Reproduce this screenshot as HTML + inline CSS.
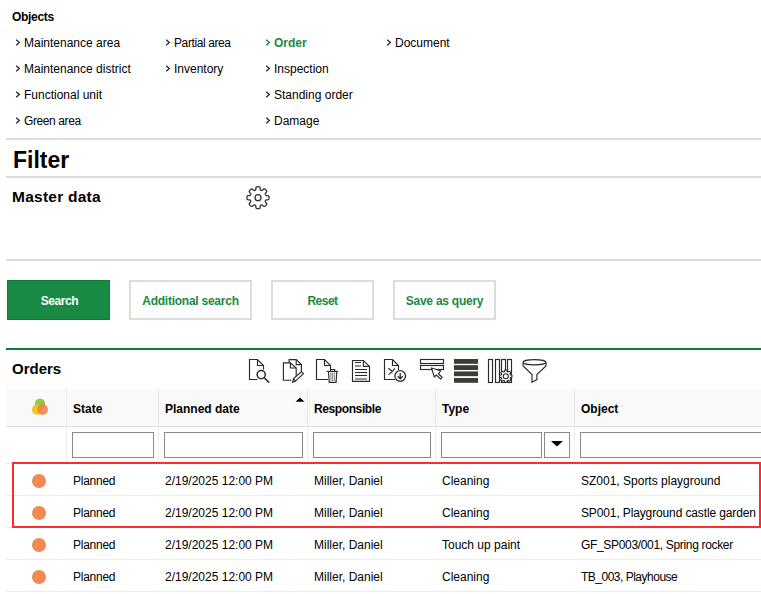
<!DOCTYPE html>
<html><head><meta charset="utf-8">
<style>
html,body{margin:0;padding:0;background:#fff;}
body{width:761px;height:594px;overflow:hidden;position:relative;font-family:"Liberation Sans",sans-serif;color:#000;}
.a{position:absolute;white-space:nowrap;line-height:12px;font-size:12px;}
.b{font-weight:bold;}
.hl{position:absolute;left:6px;right:0;height:2px;background:#dcdcdc;}
.lnk{position:absolute;white-space:nowrap;font-size:12px;line-height:12px;}
.chev{position:absolute;}
.btn{position:absolute;top:280px;height:40px;box-sizing:border-box;border:2px solid #dcdcdc;background:#fff;color:#188a43;font-weight:bold;font-size:12px;text-align:center;line-height:38px;letter-spacing:-0.25px;}
.th{position:absolute;top:403px;font-weight:bold;font-size:12px;line-height:12px;white-space:nowrap;}
.inp{position:absolute;top:432px;height:26px;box-sizing:border-box;border:1px solid #8a8a8a;background:#fff;}
.cd{position:absolute;top:427px;width:1px;height:36px;background:#efefef;}
.hd{position:absolute;top:389px;width:1px;height:37px;background:#ececec;}
.rs{position:absolute;left:6px;right:0;height:1px;background:#ececec;}
.td{position:absolute;font-size:12px;line-height:12px;white-space:nowrap;}
.dot{position:absolute;left:32px;width:14px;height:14px;border-radius:50%;background:#ef8a50;}
</style></head><body>

<div class="a b" style="left:12px;top:11px;letter-spacing:-0.3px">Objects</div>

<!-- links -->
<svg class="chev" style="left:14px;top:38px" width="8" height="10" viewBox="0 0 8 10"><path d="M2.2 1.7 L5.4 4.5 L2.2 7.3" fill="none" stroke="#222" stroke-width="1.2"/></svg><div class="lnk" style="left:24px;top:37px">Maintenance area</div>
<svg class="chev" style="left:14px;top:64px" width="8" height="10" viewBox="0 0 8 10"><path d="M2.2 1.7 L5.4 4.5 L2.2 7.3" fill="none" stroke="#222" stroke-width="1.2"/></svg><div class="lnk" style="left:24px;top:63px">Maintenance district</div>
<svg class="chev" style="left:14px;top:90px" width="8" height="10" viewBox="0 0 8 10"><path d="M2.2 1.7 L5.4 4.5 L2.2 7.3" fill="none" stroke="#222" stroke-width="1.2"/></svg><div class="lnk" style="left:24px;top:89px">Functional unit</div>
<svg class="chev" style="left:14px;top:116px" width="8" height="10" viewBox="0 0 8 10"><path d="M2.2 1.7 L5.4 4.5 L2.2 7.3" fill="none" stroke="#222" stroke-width="1.2"/></svg><div class="lnk" style="left:24px;top:115px;letter-spacing:-0.4px">Green area</div>

<svg class="chev" style="left:164px;top:38px" width="8" height="10" viewBox="0 0 8 10"><path d="M2.2 1.7 L5.4 4.5 L2.2 7.3" fill="none" stroke="#222" stroke-width="1.2"/></svg><div class="lnk" style="left:174px;top:37px;letter-spacing:-0.4px">Partial area</div>
<svg class="chev" style="left:164px;top:64px" width="8" height="10" viewBox="0 0 8 10"><path d="M2.2 1.7 L5.4 4.5 L2.2 7.3" fill="none" stroke="#222" stroke-width="1.2"/></svg><div class="lnk" style="left:174px;top:63px">Inventory</div>

<svg class="chev" style="left:264px;top:38px" width="8" height="10" viewBox="0 0 8 10"><path d="M2.2 1.7 L5.4 4.5 L2.2 7.3" fill="none" stroke="#188a43" stroke-width="1.5"/></svg><div class="lnk b" style="left:274px;top:37px;color:#188a43">Order</div>
<svg class="chev" style="left:264px;top:64px" width="8" height="10" viewBox="0 0 8 10"><path d="M2.2 1.7 L5.4 4.5 L2.2 7.3" fill="none" stroke="#222" stroke-width="1.2"/></svg><div class="lnk" style="left:274px;top:63px">Inspection</div>
<svg class="chev" style="left:264px;top:90px" width="8" height="10" viewBox="0 0 8 10"><path d="M2.2 1.7 L5.4 4.5 L2.2 7.3" fill="none" stroke="#222" stroke-width="1.2"/></svg><div class="lnk" style="left:274px;top:89px">Standing order</div>
<svg class="chev" style="left:264px;top:116px" width="8" height="10" viewBox="0 0 8 10"><path d="M2.2 1.7 L5.4 4.5 L2.2 7.3" fill="none" stroke="#222" stroke-width="1.2"/></svg><div class="lnk" style="left:274px;top:115px">Damage</div>

<svg class="chev" style="left:385px;top:38px" width="8" height="10" viewBox="0 0 8 10"><path d="M2.2 1.7 L5.4 4.5 L2.2 7.3" fill="none" stroke="#222" stroke-width="1.2"/></svg><div class="lnk" style="left:395px;top:37px">Document</div>

<div class="hl" style="top:138px"></div>
<div class="a b" style="left:13px;top:149px;font-size:23px;line-height:23px;color:#000">Filter</div>
<div class="hl" style="top:176px"></div>
<div class="a b" style="left:12px;top:189px;font-size:15.5px;line-height:15px;letter-spacing:0.25px">Master data</div>

<!-- gear -->
<svg style="position:absolute;left:244px;top:184px" width="28" height="28" viewBox="0 0 28 28">
<path fill="none" stroke="#333" stroke-width="1.3" stroke-linejoin="round" d="M14.00 2.70 L14.22 2.70 L14.43 2.71 L14.65 2.72 L14.86 2.74 L15.08 2.77 L15.29 2.81 L15.50 2.88 L15.70 2.99 L15.88 3.19 L16.02 3.55 L16.11 4.09 L16.16 4.72 L16.20 5.26 L16.28 5.62 L16.38 5.85 L16.50 6.00 L16.64 6.10 L16.77 6.18 L16.92 6.25 L17.06 6.31 L17.21 6.37 L17.36 6.42 L17.51 6.46 L17.68 6.48 L17.87 6.47 L18.10 6.38 L18.41 6.17 L18.83 5.82 L19.30 5.41 L19.75 5.10 L20.10 4.94 L20.37 4.93 L20.60 4.99 L20.79 5.09 L20.97 5.21 L21.14 5.34 L21.30 5.48 L21.47 5.62 L21.62 5.77 L21.78 5.92 L21.93 6.08 L22.08 6.23 L22.22 6.40 L22.36 6.56 L22.49 6.73 L22.61 6.91 L22.71 7.10 L22.77 7.33 L22.76 7.60 L22.60 7.95 L22.29 8.40 L21.88 8.87 L21.53 9.29 L21.32 9.60 L21.23 9.83 L21.22 10.02 L21.24 10.19 L21.28 10.34 L21.33 10.49 L21.39 10.64 L21.45 10.78 L21.52 10.93 L21.60 11.06 L21.70 11.20 L21.85 11.32 L22.08 11.42 L22.44 11.50 L22.98 11.54 L23.61 11.59 L24.15 11.68 L24.51 11.82 L24.71 12.00 L24.82 12.20 L24.89 12.41 L24.93 12.62 L24.96 12.84 L24.98 13.05 L24.99 13.27 L25.00 13.48 L25.00 13.70 L25.00 13.92 L24.99 14.13 L24.98 14.35 L24.96 14.56 L24.93 14.78 L24.89 14.99 L24.82 15.20 L24.71 15.40 L24.51 15.58 L24.15 15.72 L23.61 15.81 L22.98 15.86 L22.44 15.90 L22.08 15.98 L21.85 16.08 L21.70 16.20 L21.60 16.34 L21.52 16.47 L21.45 16.62 L21.39 16.76 L21.33 16.91 L21.28 17.06 L21.24 17.21 L21.22 17.38 L21.23 17.57 L21.32 17.80 L21.53 18.11 L21.88 18.53 L22.29 19.00 L22.60 19.45 L22.76 19.80 L22.77 20.07 L22.71 20.30 L22.61 20.49 L22.49 20.67 L22.36 20.84 L22.22 21.00 L22.08 21.17 L21.93 21.32 L21.78 21.48 L21.62 21.63 L21.47 21.78 L21.30 21.92 L21.14 22.06 L20.97 22.19 L20.79 22.31 L20.60 22.41 L20.37 22.47 L20.10 22.46 L19.75 22.30 L19.30 21.99 L18.83 21.58 L18.41 21.23 L18.10 21.02 L17.87 20.93 L17.68 20.92 L17.51 20.94 L17.36 20.98 L17.21 21.03 L17.06 21.09 L16.92 21.15 L16.77 21.22 L16.64 21.30 L16.50 21.40 L16.38 21.55 L16.28 21.78 L16.20 22.14 L16.16 22.68 L16.11 23.31 L16.02 23.85 L15.88 24.21 L15.70 24.41 L15.50 24.52 L15.29 24.59 L15.08 24.63 L14.86 24.66 L14.65 24.68 L14.43 24.69 L14.22 24.70 L14.00 24.70 L13.78 24.70 L13.57 24.69 L13.35 24.68 L13.14 24.66 L12.92 24.63 L12.71 24.59 L12.50 24.52 L12.30 24.41 L12.12 24.21 L11.98 23.85 L11.89 23.31 L11.84 22.68 L11.80 22.14 L11.72 21.78 L11.62 21.55 L11.50 21.40 L11.36 21.30 L11.23 21.22 L11.08 21.15 L10.94 21.09 L10.79 21.03 L10.64 20.98 L10.49 20.94 L10.32 20.92 L10.13 20.93 L9.90 21.02 L9.59 21.23 L9.17 21.58 L8.70 21.99 L8.25 22.30 L7.90 22.46 L7.63 22.47 L7.40 22.41 L7.21 22.31 L7.03 22.19 L6.86 22.06 L6.70 21.92 L6.53 21.78 L6.38 21.63 L6.22 21.48 L6.07 21.32 L5.92 21.17 L5.78 21.00 L5.64 20.84 L5.51 20.67 L5.39 20.49 L5.29 20.30 L5.23 20.07 L5.24 19.80 L5.40 19.45 L5.71 19.00 L6.12 18.53 L6.47 18.11 L6.68 17.80 L6.77 17.57 L6.78 17.38 L6.76 17.21 L6.72 17.06 L6.67 16.91 L6.61 16.76 L6.55 16.62 L6.48 16.47 L6.40 16.34 L6.30 16.20 L6.15 16.08 L5.92 15.98 L5.56 15.90 L5.02 15.86 L4.39 15.81 L3.85 15.72 L3.49 15.58 L3.29 15.40 L3.18 15.20 L3.11 14.99 L3.07 14.78 L3.04 14.56 L3.02 14.35 L3.01 14.13 L3.00 13.92 L3.00 13.70 L3.00 13.48 L3.01 13.27 L3.02 13.05 L3.04 12.84 L3.07 12.62 L3.11 12.41 L3.18 12.20 L3.29 12.00 L3.49 11.82 L3.85 11.68 L4.39 11.59 L5.02 11.54 L5.56 11.50 L5.92 11.42 L6.15 11.32 L6.30 11.20 L6.40 11.06 L6.48 10.93 L6.55 10.78 L6.61 10.64 L6.67 10.49 L6.72 10.34 L6.76 10.19 L6.78 10.02 L6.77 9.83 L6.68 9.60 L6.47 9.29 L6.12 8.87 L5.71 8.40 L5.40 7.95 L5.24 7.60 L5.23 7.33 L5.29 7.10 L5.39 6.91 L5.51 6.73 L5.64 6.56 L5.78 6.40 L5.92 6.23 L6.07 6.08 L6.22 5.92 L6.38 5.77 L6.53 5.62 L6.70 5.48 L6.86 5.34 L7.03 5.21 L7.21 5.09 L7.40 4.99 L7.63 4.93 L7.90 4.94 L8.25 5.10 L8.70 5.41 L9.17 5.82 L9.59 6.17 L9.90 6.38 L10.13 6.47 L10.32 6.48 L10.49 6.46 L10.64 6.42 L10.79 6.37 L10.94 6.31 L11.08 6.25 L11.23 6.18 L11.36 6.10 L11.50 6.00 L11.62 5.85 L11.72 5.62 L11.80 5.26 L11.84 4.72 L11.89 4.09 L11.98 3.55 L12.12 3.19 L12.30 2.99 L12.50 2.88 L12.71 2.81 L12.92 2.77 L13.14 2.74 L13.35 2.72 L13.57 2.71 L13.78 2.70 Z"/>
<circle cx="14" cy="13.7" r="3" fill="none" stroke="#333" stroke-width="1.3"/>
</svg>

<div class="hl" style="top:259px"></div>

<div class="btn" style="left:7px;width:103px;background:#188a43;border:1px solid #137a38;color:#fff;line-height:40px;letter-spacing:-0.4px;padding-left:2px">Search</div>
<div class="btn" style="left:129px;width:123px;">Additional search</div>
<div class="btn" style="left:271px;width:103px;letter-spacing:-0.5px">Reset</div>
<div class="btn" style="left:393px;width:103px;">Save as query</div>

<div class="hl" style="top:348px;background:#0b7a32"></div>
<div class="a b" style="left:12px;top:361px;font-size:15px;line-height:15px;">Orders</div>

<svg style="position:absolute;left:0;top:0" width="761" height="594" viewBox="0 0 761 594">
<g fill="none" stroke="#2b2b2b" stroke-width="1.15" stroke-linejoin="miter">
<!-- icon1 doc + magnifier -->
<path d="M263.5 369.6 V365.5 L257.5 359.5 H249.5 V379.5 H257.5"/>
<path d="M257.5 359.5 V365.5 H263.5"/>
<circle cx="261.2" cy="374.6" r="4.1" stroke-width="1.5"/>
<path d="M264.2 377.7 L269.2 382.6" stroke-width="1.5"/>
<!-- icon2 copy + pencil -->
<path d="M289.1 362.8 V359.6 H296.2 L301.4 364.6 V372.5"/>
<path d="M296.2 359.6 V364.6 H301.4"/>
<path d="M296.2 377 V368 L290.4 362.8 H283.4 V380.2 H291.5"/>
<path d="M290.4 362.8 V368 H296.2"/>
<path d="M292.6 382.3 L293.6 378.6 L301.6 371.6 L303.4 373.6 L295.6 381.1 Z" fill="#fff"/>
<path d="M293.6 378.6 L295.6 381.1"/>
<!-- icon3 doc + trash -->
<path d="M330.5 369.6 V365.5 L324.5 359.5 H316.5 V379.5 H328"/>
<path d="M324.5 359.5 V365.5 H330.5"/>
<path d="M326.8 371.4 H338.1"/>
<path d="M330.6 371.4 V369.5 H334.7 V371.4"/>
<path d="M328.5 371.4 L329.2 382.3 H336.1 L336.8 371.4"/>
<path d="M330.9 372.5 V381 M332.6 372.5 V381 M334.3 372.5 V381" stroke-width="0.8" stroke="#666"/>
<!-- icon4 text doc -->
<path d="M352.5 360.5 H363.4 L369.5 366.4 V381.3 H352.5 Z"/>
<path d="M363.4 360.5 V366.4 H369.5"/>
<path d="M355 362.5 H361 M355 366 H361 M355 369.5 H367 M355 372.5 H367 M355 375.5 H367 M355 379 H367" stroke-width="1"/>
<!-- icon5 export doc -->
<path d="M398.5 370 V365.5 L392.5 359.5 H384.5 V379.5 H395"/>
<path d="M392.5 359.5 V365.5 H398.5"/>
<path d="M388.3 368.3 L392.4 371.5 L388.6 374.6 M392.4 371.5 L394.8 368.3"/>
<circle cx="400.2" cy="376" r="5.3" fill="#fff" stroke-width="1.3"/>
<path d="M400.2 373 V378.8 M397.7 376.3 L400.2 378.9 L402.7 376.3" stroke-width="1.3"/>
<!-- icon6 select rows -->
<rect x="420.5" y="359.5" width="23" height="4"/>
<rect x="420.5" y="365.5" width="23" height="4"/>
<path d="M431.5 368 L434.3 377 L436.3 375 L440.6 379 L442.2 377.2 L438.4 373.8 L440.6 370.8 Z" fill="#fff"/>
<!-- icon8 columns -->
<rect x="488.5" y="359.5" width="4" height="23"/>
<rect x="495.5" y="359.5" width="4" height="23"/>
<rect x="501.5" y="359.5" width="4" height="23"/>
<rect x="507.5" y="359.5" width="4" height="23"/>
<path d="M505.80 370.00 L505.92 370.00 L506.04 370.01 L506.16 370.01 L506.29 370.02 L506.41 370.04 L506.53 370.06 L506.64 370.09 L506.76 370.15 L506.86 370.26 L506.95 370.44 L507.00 370.71 L507.04 371.03 L507.08 371.30 L507.13 371.49 L507.19 371.61 L507.27 371.68 L507.35 371.74 L507.43 371.78 L507.51 371.82 L507.60 371.86 L507.68 371.89 L507.77 371.92 L507.86 371.95 L507.96 371.97 L508.06 371.97 L508.19 371.93 L508.36 371.83 L508.58 371.66 L508.83 371.47 L509.06 371.32 L509.25 371.25 L509.40 371.25 L509.52 371.29 L509.63 371.34 L509.73 371.41 L509.82 371.49 L509.92 371.57 L510.01 371.65 L510.10 371.73 L510.18 371.82 L510.27 371.90 L510.35 371.99 L510.43 372.08 L510.51 372.18 L510.59 372.27 L510.66 372.37 L510.71 372.48 L510.75 372.60 L510.75 372.75 L510.68 372.94 L510.53 373.17 L510.34 373.42 L510.17 373.64 L510.07 373.81 L510.03 373.94 L510.03 374.04 L510.05 374.14 L510.08 374.23 L510.11 374.32 L510.14 374.40 L510.18 374.49 L510.22 374.57 L510.26 374.65 L510.32 374.73 L510.39 374.81 L510.51 374.87 L510.70 374.92 L510.97 374.96 L511.29 375.00 L511.56 375.05 L511.74 375.14 L511.85 375.24 L511.91 375.36 L511.94 375.47 L511.96 375.59 L511.98 375.71 L511.99 375.84 L511.99 375.96 L512.00 376.08 L512.00 376.20 L512.00 376.32 L511.99 376.44 L511.99 376.56 L511.98 376.69 L511.96 376.81 L511.94 376.93 L511.91 377.04 L511.85 377.16 L511.74 377.26 L511.56 377.35 L511.29 377.40 L510.97 377.44 L510.70 377.48 L510.51 377.53 L510.39 377.59 L510.32 377.67 L510.26 377.75 L510.22 377.83 L510.18 377.91 L510.14 378.00 L510.11 378.08 L510.08 378.17 L510.05 378.26 L510.03 378.36 L510.03 378.46 L510.07 378.59 L510.17 378.76 L510.34 378.98 L510.53 379.23 L510.68 379.46 L510.75 379.65 L510.75 379.80 L510.71 379.92 L510.66 380.03 L510.59 380.13 L510.51 380.22 L510.43 380.32 L510.35 380.41 L510.27 380.50 L510.18 380.58 L510.10 380.67 L510.01 380.75 L509.92 380.83 L509.82 380.91 L509.73 380.99 L509.63 381.06 L509.52 381.11 L509.40 381.15 L509.25 381.15 L509.06 381.08 L508.83 380.93 L508.58 380.74 L508.36 380.57 L508.19 380.47 L508.06 380.43 L507.96 380.43 L507.86 380.45 L507.77 380.48 L507.68 380.51 L507.60 380.54 L507.51 380.58 L507.43 380.62 L507.35 380.66 L507.27 380.72 L507.19 380.79 L507.13 380.91 L507.08 381.10 L507.04 381.37 L507.00 381.69 L506.95 381.96 L506.86 382.14 L506.76 382.25 L506.64 382.31 L506.53 382.34 L506.41 382.36 L506.29 382.38 L506.16 382.39 L506.04 382.39 L505.92 382.40 L505.80 382.40 L505.68 382.40 L505.56 382.39 L505.44 382.39 L505.31 382.38 L505.19 382.36 L505.07 382.34 L504.96 382.31 L504.84 382.25 L504.74 382.14 L504.65 381.96 L504.60 381.69 L504.56 381.37 L504.52 381.10 L504.47 380.91 L504.41 380.79 L504.33 380.72 L504.25 380.66 L504.17 380.62 L504.09 380.58 L504.00 380.54 L503.92 380.51 L503.83 380.48 L503.74 380.45 L503.64 380.43 L503.54 380.43 L503.41 380.47 L503.24 380.57 L503.02 380.74 L502.77 380.93 L502.54 381.08 L502.35 381.15 L502.20 381.15 L502.08 381.11 L501.97 381.06 L501.87 380.99 L501.78 380.91 L501.68 380.83 L501.59 380.75 L501.50 380.67 L501.42 380.58 L501.33 380.50 L501.25 380.41 L501.17 380.32 L501.09 380.22 L501.01 380.13 L500.94 380.03 L500.89 379.92 L500.85 379.80 L500.85 379.65 L500.92 379.46 L501.07 379.23 L501.26 378.98 L501.43 378.76 L501.53 378.59 L501.57 378.46 L501.57 378.36 L501.55 378.26 L501.52 378.17 L501.49 378.08 L501.46 378.00 L501.42 377.91 L501.38 377.83 L501.34 377.75 L501.28 377.67 L501.21 377.59 L501.09 377.53 L500.90 377.48 L500.63 377.44 L500.31 377.40 L500.04 377.35 L499.86 377.26 L499.75 377.16 L499.69 377.04 L499.66 376.93 L499.64 376.81 L499.62 376.69 L499.61 376.56 L499.61 376.44 L499.60 376.32 L499.60 376.20 L499.60 376.08 L499.61 375.96 L499.61 375.84 L499.62 375.71 L499.64 375.59 L499.66 375.47 L499.69 375.36 L499.75 375.24 L499.86 375.14 L500.04 375.05 L500.31 375.00 L500.63 374.96 L500.90 374.92 L501.09 374.87 L501.21 374.81 L501.28 374.73 L501.34 374.65 L501.38 374.57 L501.42 374.49 L501.46 374.40 L501.49 374.32 L501.52 374.23 L501.55 374.14 L501.57 374.04 L501.57 373.94 L501.53 373.81 L501.43 373.64 L501.26 373.42 L501.07 373.17 L500.92 372.94 L500.85 372.75 L500.85 372.60 L500.89 372.48 L500.94 372.37 L501.01 372.27 L501.09 372.18 L501.17 372.08 L501.25 371.99 L501.33 371.90 L501.42 371.82 L501.50 371.73 L501.59 371.65 L501.68 371.57 L501.78 371.49 L501.87 371.41 L501.97 371.34 L502.08 371.29 L502.20 371.25 L502.35 371.25 L502.54 371.32 L502.77 371.47 L503.02 371.66 L503.24 371.83 L503.41 371.93 L503.54 371.97 L503.64 371.97 L503.74 371.95 L503.83 371.92 L503.92 371.89 L504.00 371.86 L504.09 371.82 L504.17 371.78 L504.25 371.74 L504.33 371.68 L504.41 371.61 L504.47 371.49 L504.52 371.30 L504.56 371.03 L504.60 370.71 L504.65 370.44 L504.74 370.26 L504.84 370.15 L504.96 370.09 L505.07 370.06 L505.19 370.04 L505.31 370.02 L505.44 370.01 L505.56 370.01 L505.68 370.00 Z" fill="#fff" stroke-width="1.1"/>
<circle cx="505.8" cy="376.2" r="2.5" stroke-width="1.1"/>
<!-- icon9 funnel -->
<ellipse cx="534.5" cy="362.2" rx="11.4" ry="2.6"/>
<path d="M523.1 362.2 V366 L532 374.5 V382.2 L536.9 379.6 V374.5 L546 366 V362.2"/>
</g>
<g fill="#3e3a36">
<rect x="454" y="359" width="24" height="4.8"/>
<rect x="454" y="365.2" width="24" height="4.8"/>
<rect x="454" y="371.4" width="24" height="4.8"/>
<rect x="454" y="378" width="24" height="4.8"/>
</g>
</svg>

<!-- table header -->
<div style="position:absolute;left:6px;right:0;top:389px;height:37px;background:#f9f9f9;"></div>
<div class="rs" style="top:426px;background:#dedede"></div>
<div class="hd" style="left:66px"></div>
<div class="hd" style="left:158px"></div>
<div class="hd" style="left:307px"></div>
<div class="hd" style="left:435px"></div>
<div class="hd" style="left:574px"></div>

<svg style="position:absolute;left:28px;top:395px" width="24" height="22" viewBox="0 0 24 22">
<circle cx="12" cy="8.8" r="5.2" fill="#94c83d"/>
<circle cx="9.1" cy="14.5" r="5.2" fill="#f2c015" fill-opacity="0.9"/>
<circle cx="14.6" cy="14.5" r="5.4" fill="#f08048" fill-opacity="0.85"/>
</svg>

<div class="th" style="left:73px">State</div>
<div class="th" style="left:165px">Planned date</div>
<svg style="position:absolute;left:295px;top:397px" width="10" height="5" viewBox="0 0 10 5"><path d="M0.5 4.8 L5 0.6 L9.5 4.8 Z" fill="#000"/></svg>
<div class="th" style="left:314px;letter-spacing:-0.4px">Responsible</div>
<div class="th" style="left:442px">Type</div>
<div class="th" style="left:581px">Object</div>

<!-- filter row -->
<div class="cd" style="left:66px"></div>
<div class="cd" style="left:158px"></div>
<div class="cd" style="left:307px"></div>
<div class="cd" style="left:435px"></div>
<div class="cd" style="left:574px"></div>
<div class="inp" style="left:72px;width:82px"></div>
<div class="inp" style="left:164px;width:139px"></div>
<div class="inp" style="left:313px;width:118px"></div>
<div class="inp" style="left:441px;width:101px"></div>
<div class="inp" style="left:544px;width:26px"></div>
<svg style="position:absolute;left:551px;top:441px" width="12" height="6" viewBox="0 0 12 6"><path d="M0 0 L12 0 L6 5.5 Z" fill="#000"/></svg>
<div class="inp" style="left:580px;width:190px"></div>

<!-- rows -->
<div class="rs" style="top:463px"></div>
<div class="rs" style="top:495px"></div>
<div class="rs" style="top:527px"></div>
<div class="rs" style="top:559px"></div>
<div class="rs" style="top:591px"></div>

<div class="dot" style="top:474px"></div>
<div class="td" style="left:73px;top:475px;letter-spacing:-0.25px">Planned</div>
<div class="td" style="left:165px;top:475px">2/19/2025 12:00 PM</div>
<div class="td" style="left:314px;top:475px">Miller, Daniel</div>
<div class="td" style="left:442px;top:475px">Cleaning</div>
<div class="td" style="left:581px;top:475px">SZ001, Sports playground</div>

<div class="dot" style="top:506px"></div>
<div class="td" style="left:73px;top:507px;letter-spacing:-0.25px">Planned</div>
<div class="td" style="left:165px;top:507px">2/19/2025 12:00 PM</div>
<div class="td" style="left:314px;top:507px">Miller, Daniel</div>
<div class="td" style="left:442px;top:507px">Cleaning</div>
<div class="td" style="left:581px;top:507px;letter-spacing:-0.13px">SP001, Playground castle garden</div>

<div class="dot" style="top:538px"></div>
<div class="td" style="left:73px;top:539px;letter-spacing:-0.25px">Planned</div>
<div class="td" style="left:165px;top:539px">2/19/2025 12:00 PM</div>
<div class="td" style="left:314px;top:539px">Miller, Daniel</div>
<div class="td" style="left:442px;top:539px">Touch up paint</div>
<div class="td" style="left:581px;top:539px;letter-spacing:-0.33px">GF_SP003/001, Spring rocker</div>

<div class="dot" style="top:570px"></div>
<div class="td" style="left:73px;top:571px;letter-spacing:-0.25px">Planned</div>
<div class="td" style="left:165px;top:571px">2/19/2025 12:00 PM</div>
<div class="td" style="left:314px;top:571px">Miller, Daniel</div>
<div class="td" style="left:442px;top:571px">Cleaning</div>
<div class="td" style="left:581px;top:571px;letter-spacing:-0.5px">TB_003, Playhouse</div>

<!-- red highlight -->
<div style="position:absolute;left:12px;top:462px;width:749px;height:66px;box-sizing:border-box;border:2px solid #ff2b2e;"></div>

</body></html>
